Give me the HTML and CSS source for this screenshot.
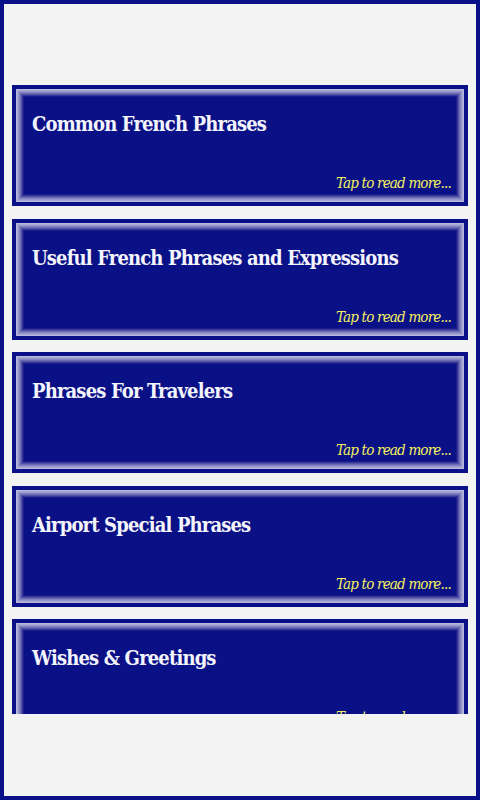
FILE: index.html
```html
<!doctype html>
<html lang="en">
    <head>
        <meta charset="UTF-8" />
        <meta name="viewport" content="width=device-width, initial-scale=1" />
        <link rel="stylesheet" href="styles.css">
        <title>French Phrases</title>
    </head>
    <body>
        <div id="frame">
            <div class="top-space"></div>
            <div id="list">
                <div class="card">
                    <h2 class="card-title">Common French Phrases</h2>
                    <p class="card-more">Tap to read more...</p>
                </div>
                <div class="card">
                    <h2 class="card-title">Useful French Phrases and Expressions</h2>
                    <p class="card-more">Tap to read more...</p>
                </div>
                <div class="card">
                    <h2 class="card-title">Phrases For Travelers</h2>
                    <p class="card-more">Tap to read more...</p>
                </div>
                <div class="card">
                    <h2 class="card-title">Airport Special Phrases</h2>
                    <p class="card-more">Tap to read more...</p>
                </div>
                <div class="card">
                    <h2 class="card-title">Wishes &amp; Greetings</h2>
                    <p class="card-more">Tap to read more...</p>
                </div>
            </div>
        </div>
    </body>
</html>
```

FILE: styles.css
```css
html,
body {
    margin: 0;
    padding: 0;
}
body {
    font-family: "DejaVu Serif Condensed", "DejaVu Serif", serif;
    background-color: #f3f3f3;
    overflow: hidden;
}
#frame {
    box-sizing: border-box;
    width: 480px;
    height: 800px;
    border: 4px solid #0a1088;
    padding: 0 8px;
    display: flex;
    flex-direction: column;
}
.top-space {
    height: 81px;
    flex: none;
}
#list {
    height: 629px;
    overflow: hidden;
    display: flex;
    flex-direction: column;
    gap: 12.5px;
}

/* -- CARDS -- */

/* stacked inset rings make the square bevel round the card */
.card {
    box-sizing: border-box;
    flex: none;
    height: 121px;
    border: 4px solid #0a1088;
    background-color: #0a1085;
    box-shadow:
        inset 0 0 0 1px #b8b8dc,
        inset 0 0 0 2px #a8a8d4,
        inset 0 0 0 3px #9898cc,
        inset 0 0 0 4px #8484c1,
        inset 0 0 0 5px #6c6cb4,
        inset 0 0 0 6px #5252a6,
        inset 0 0 0 7px #363698,
        inset 0 0 0 8px #1b1b8c;
    padding: 21px 13px 0 16px;
    display: flex;
    flex-direction: column;
    justify-content: space-between;
}
.card-title {
    margin: 0;
    color: #f4f4fc;
    font-size: 20px;
    font-weight: bold;
    letter-spacing: -0.85px;
    line-height: 28px;
}
.card-more {
    margin: 0 0 9px;
    align-self: flex-end;
    color: #f4f060;
    font-size: 15px;
    font-style: italic;
    letter-spacing: -0.8px;
    line-height: 20px;
}
```
